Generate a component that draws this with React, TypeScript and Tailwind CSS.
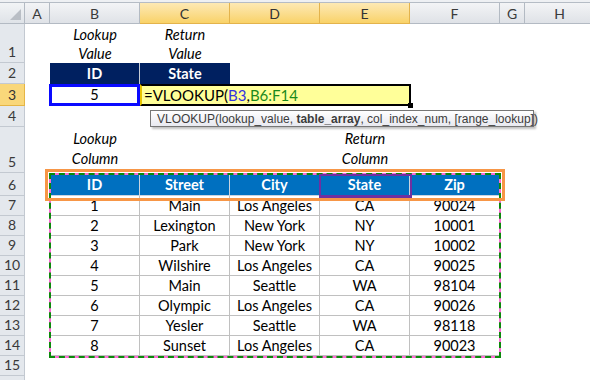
import React from 'react';

type Col = { key: string; w: string; hi: boolean };

const COLS: Col[] = [
  { key: 'A', w: 'w-[25px]', hi: false },
  { key: 'B', w: 'w-[90px]', hi: false },
  { key: 'C', w: 'w-[90px]', hi: true },
  { key: 'D', w: 'w-[90px]', hi: true },
  { key: 'E', w: 'w-[90px]', hi: true },
  { key: 'F', w: 'w-[90px]', hi: false },
  { key: 'G', w: 'w-[25px]', hi: false },
  { key: 'H', w: 'w-[70px]', hi: false },
];

const HEADERS = ['ID', 'Street', 'City', 'State', 'Zip'];

const ROWS: (string | number)[][] = [
  [1, 'Main', 'Los Angeles', 'CA', '90024'],
  [2, 'Lexington', 'New York', 'NY', '10001'],
  [3, 'Park', 'New York', 'NY', '10002'],
  [4, 'Wilshire', 'Los Angeles', 'CA', '90025'],
  [5, 'Main', 'Seattle', 'WA', '98104'],
  [6, 'Olympic', 'Los Angeles', 'CA', '90026'],
  [7, 'Yesler', 'Seattle', 'WA', '98118'],
  [8, 'Sunset', 'Los Angeles', 'CA', '90023'],
];

const RowHead = ({ n, h, active = false }: { n?: number; h: string; active?: boolean }) => (
  <div
    className={`w-[25px] shrink-0 ${h} flex items-end justify-center pb-[1px] border-r border-b text-[14px] leading-[18px] ${
      active ? 'bg-[#f9d77a] border-[#e5b545] text-[#333]' : 'bg-[#e4e8ed] border-[#c3c9d1] text-[#3a3a3a]'
    }`}
  >
    {n}
  </div>
);

const Blank = ({ w }: { w: string }) => <div className={`${w} shrink-0`} />;

const Note = ({ lines, w, pad }: { lines: string[]; w: string; pad: string }) => (
  <div className={`${w} shrink-0 flex flex-col justify-end items-center italic text-[14.5px] text-black ${pad}`}>
    {lines.map((l) => (
      <span key={l}>{l}</span>
    ))}
  </div>
);

export default function App() {
  return (
    <div className="relative w-[590px] h-[380px] overflow-hidden bg-white font-['Lato',sans-serif]">
      {/* column headers */}
      <div className="h-[3px] bg-[#eef0f3] border-b border-[#b5bcc5]" />
      <div className="flex h-[21px]">
        <div className="w-[25px] shrink-0 relative bg-linear-to-b from-[#f2f4f6] to-[#dfe3e8] border-r border-b border-[#b3bac3]">
          <div className="absolute right-[3px] bottom-[3px] w-0 h-0 border-l-[11px] border-l-transparent border-b-[11px] border-b-[#b9bec5]" />
        </div>
        {COLS.map((c) => (
          <div
            key={c.key}
            className={`${c.w} shrink-0 flex items-center justify-center border-r border-b text-[14px] ${
              c.hi
                ? 'bg-linear-to-b from-[#fde9b4] to-[#f9d267] border-[#e3b34c] text-[#333]'
                : 'bg-linear-to-b from-[#f3f4f6] to-[#dfe2e7] border-[#b3bac3] text-[#3a3a3a]'
            }`}
          >
            {c.key}
          </div>
        ))}
      </div>

      {/* row 1 */}
      <div className="flex">
        <RowHead n={1} h="h-[39px]" />
        <Blank w="w-[25px]" />
        <Note lines={['Lookup', 'Value']} w="w-[90px]" pad="leading-[19px] pb-[0px]" />
        <Note lines={['Return', 'Value']} w="w-[90px]" pad="leading-[19px] pb-[0px]" />
      </div>

      {/* row 2 */}
      <div className="flex">
        <RowHead n={2} h="h-[21px]" />
        <Blank w="w-[25px]" />
        <div className="w-[90px] shrink-0 h-[21px] flex items-center justify-center bg-[#002060] text-white font-bold text-[14.5px] border-r border-[#c7ccd6]">
          ID
        </div>
        <div className="w-[90px] shrink-0 h-[21px] flex items-center justify-center bg-[#002060] text-white font-bold text-[14.5px]">
          State
        </div>
      </div>

      {/* row 3 */}
      <div className="flex">
        <RowHead n={3} h="h-[22px]" active />
        <Blank w="w-[24px]" />
        <div className="w-[91px] shrink-0 h-[22px] flex items-center justify-center border-[3px] border-[#0a0aff] text-[14.5px] text-black">
          5
        </div>
        <div className="relative w-[271px] shrink-0 h-[22px] flex items-center pl-[2px] bg-[#ffff99] border-y-2 border-r-2 border-black border-l-2 border-l-[#e8c400] text-[15px] text-black">
          <span>
            =VLOOKUP(<span className="text-[#3434e0]">B3</span>,<span className="text-[#1b8a1b]">B6:F14</span>
          </span>
          <div className="absolute -right-[4px] -bottom-[4px] w-[5px] h-[5px] bg-black" />
        </div>
      </div>

      {/* row 4 */}
      <div className="flex">
        <RowHead n={4} h="h-[21px]" />
      </div>

      {/* row 5 */}
      <div className="flex">
        <RowHead n={5} h="h-[46px]" />
        <Blank w="w-[25px]" />
        <Note lines={['Lookup', 'Column']} w="w-[90px]" pad="leading-[20px] pb-[4px]" />
        <Blank w="w-[90px]" />
        <Blank w="w-[90px]" />
        <Note lines={['Return', 'Column']} w="w-[90px]" pad="leading-[20px] pb-[4px]" />
      </div>

      {/* row 6: table header */}
      <div className="flex">
        <RowHead n={6} h="h-[23px]" />
        <Blank w="w-[25px]" />
        {HEADERS.map((h) => (
          <div
            key={h}
            className="w-[90px] shrink-0 h-[23px] flex items-center justify-center pt-[1px] bg-[#0070c0] text-white font-bold text-[14.5px] border-r border-b border-[#c9d3df]"
          >
            {h}
          </div>
        ))}
      </div>

      {/* data rows */}
      {ROWS.map((r, i) => (
        <div key={i} className="flex">
          <RowHead n={i + 7} h="h-[20px]" />
          <Blank w="w-[25px]" />
          {r.map((v, j) => (
            <div
              key={j}
              className="w-[90px] shrink-0 h-[20px] flex items-center justify-center pt-[1px] text-[14.5px] text-black border-r border-b border-[#c0c0c0]"
            >
              {v}
            </div>
          ))}
        </div>
      ))}

      <div className="flex">
        <RowHead n={15} h="h-[20px]" />
      </div>
      <div className="flex">
        <RowHead h="h-[20px]" />
      </div>

      {/* function tooltip */}
      <div className="absolute left-[150px] top-[110px] w-[384px] h-[17px] flex items-center pl-[6px] border border-[#767676] bg-linear-to-b from-white to-[#e8e9f0] shadow-[2px_2px_2px_rgba(0,0,0,0.25)] text-[12px] text-[#3c3c3c] font-['Liberation_Sans',sans-serif] whitespace-nowrap">
        VLOOKUP(lookup_value,&nbsp;<b>table_array</b>, col_index_num, [range_lookup])
      </div>

      {/* copy range marquee */}
      <div className="absolute left-[49px] top-[173px] w-[452px] h-[185px] border-2 border-[#ff6ad5]" />
      <div className="absolute left-[49px] top-[173px] w-[452px] h-[185px] border-2 border-dashed border-[#0b8a0b]" />

      {/* annotations */}
      <div className="absolute left-[45px] top-[169px] w-[460px] h-[32px] border-[3px] border-[#f79646]" />
      <div className="absolute left-[319px] top-[174px] w-[93px] h-[24px] border-2 border-b-[3px] border-[#7030a0]" />
    </div>
  );
}
